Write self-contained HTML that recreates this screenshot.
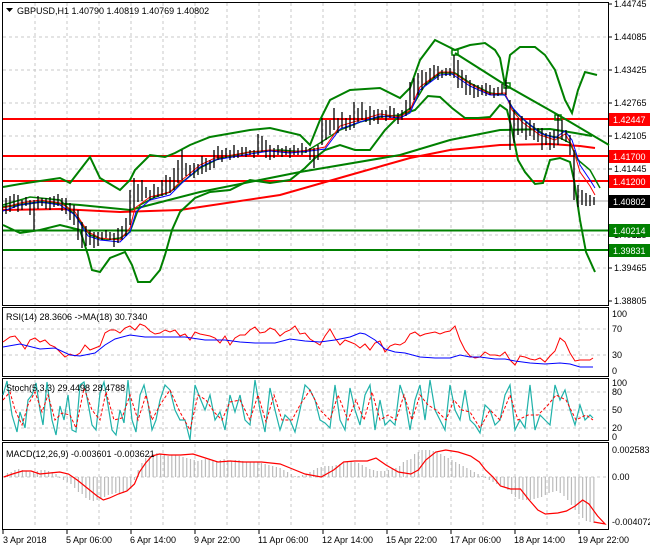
<!DOCTYPE html>
<html><head><meta charset="utf-8"><style>
body{margin:0;background:#fff;width:650px;height:550px;overflow:hidden;font-family:"Liberation Sans",sans-serif}
svg{display:block}
text{font-family:"Liberation Sans",sans-serif;font-size:9px;fill:#000}
</style></head><body>
<svg width="650" height="550" viewBox="0 0 650 550" xmlns="http://www.w3.org/2000/svg">
<rect width="650" height="550" fill="#fff"/>
<g stroke="#c8c8c8" stroke-dasharray="3,3" stroke-width="1">
<path d="M35 3V305M67 3V305M99 3V305M131 3V305M163 3V305M195 3V305M227 3V305M259 3V305M291 3V305M323 3V305M355 3V305M387 3V305M419 3V305M451 3V305M483 3V305M515 3V305M547 3V305M579 3V305"/>
<path d="M35 309V376M67 309V376M99 309V376M131 309V376M163 309V376M195 309V376M227 309V376M259 309V376M291 309V376M323 309V376M355 309V376M387 309V376M419 309V376M451 309V376M483 309V376M515 309V376M547 309V376M579 309V376"/>
<path d="M35 380V440M67 380V440M99 380V440M131 380V440M163 380V440M195 380V440M227 380V440M259 380V440M291 380V440M323 380V440M355 380V440M387 380V440M419 380V440M451 380V440M483 380V440M515 380V440M547 380V440M579 380V440"/>
<path d="M35 444V528M67 444V528M99 444V528M131 444V528M163 444V528M195 444V528M227 444V528M259 444V528M291 444V528M323 444V528M355 444V528M387 444V528M419 444V528M451 444V528M483 444V528M515 444V528M547 444V528M579 444V528"/>
<path d="M3 37H608M3 70H608M3 103H608M3 136H608M3 169H608M3 235H608M3 268H608M3 329H608M3 355H608M3 392H608M3 410H608M3 428H608M3 477H608"/>
</g>
<g fill="none" stroke="#000" stroke-width="1">
<rect x="2.5" y="2.5" width="606" height="303"/>
<rect x="2.5" y="307.5" width="606" height="69"/>
<rect x="2.5" y="378.5" width="606" height="62"/>
<rect x="2.5" y="442.5" width="606" height="87"/>
</g>
<path d="M3 201H608" stroke="#aaa" stroke-width="1"/>
<g stroke="#f00" stroke-width="2"><path d="M3 119H608M3 156H608M3 181H608"/></g>
<g stroke="#008000" stroke-width="2"><path d="M3 230.5H608M3 250H608"/></g>
<polyline fill="none" stroke="#008000" stroke-width="2" points="3,207 40,202 80,205 130,210 200,192 300,172 400,155 450,140 500,130 550,129 575,133 592,136"/>
<polyline fill="none" stroke="#f00" stroke-width="2" points="3,210 60,209 120,212 180,210 280,195 350,175 410,158 450,150 500,145 550,144 580,146 595,148"/>
<polyline fill="none" stroke="#008000" stroke-width="2" points="455,53 507,86 560,116 609,145"/>
<g fill="none" stroke="#008000" stroke-width="1.5"><rect x="452" y="50" width="6" height="5"/><rect x="504" y="83" width="6" height="5"/><rect x="555" y="115" width="6" height="5"/></g>
<g fill="none" stroke="#008000" stroke-width="2">
<polyline points="3,187 20,184 60,178 70,183 80,170 90,157 100,178 120,190 130,180 135,170 150,155 165,157 175,153 190,145 210,137 250,130 270,128 300,135 310,145 320,120 330,100 350,90 380,88 400,98 410,88 420,60 435,40 445,45 455,50 470,45 485,43 495,50 500,58 505,85 510,55 520,47 535,47 545,55 555,70 565,100 572,113 578,90 585,72 597,75"/>
<polyline points="3,225 20,233 40,230 60,225 80,230 88,255 92,270 100,272 110,258 125,252 132,265 138,282 150,282 160,270 165,255 172,230 180,212 195,198 210,192 230,190 250,180 270,183 290,180 305,168 315,158 325,150 340,145 355,150 370,150 385,130 400,115 415,110 428,96 440,97 452,108 465,118 478,118 490,117 500,105 507,110 512,130 518,160 525,172 535,184 543,183 550,160 560,158 570,162 574,180 580,220 586,252 595,272"/>
<polyline stroke-width="1.5" points="3,205 30,197 60,200 75,215 90,235 105,240 120,238 130,232 140,205 155,197 170,192 185,180 200,168 220,158 250,152 280,150 305,152 320,143 340,130 360,122 380,117 400,115 412,107 425,85 440,73 455,73 470,83 490,93 505,95 515,112 530,125 545,135 560,138 570,143 578,160 590,170 600,188"/>
</g>
<polyline fill="none" stroke="#f00" stroke-width="1" points="3,208 20,203 40,200 60,203 75,212 88,232 100,238 120,240 130,228 135,208 150,197 170,192 182,180 200,165 215,158 250,152 270,150 290,152 310,150 325,147 340,126 360,120 380,114 400,117 410,110 420,87 440,72 452,72 470,84 490,94 505,93 512,110 522,122 540,135 555,140 565,134 572,145 580,172 590,186 595,195"/>
<polyline fill="none" stroke="#00f" stroke-width="1" points="3,211 20,205 40,202 60,205 75,215 88,236 100,240 120,242 130,232 136,212 150,200 170,195 182,183 200,167 215,160 250,154 270,151 290,153 310,151 325,149 340,129 360,122 380,116 400,118 410,113 420,90 440,75 452,74 470,86 490,95 505,95 512,107 522,118 540,133 555,138 565,131 572,140 580,165 590,180 595,188"/>
<g stroke="#000" stroke-width="1.3" fill="none">
<path d="M6 198V214M10 196V212M14 194V208M18 195V212M22 200V210M26 197V206M30 200V215M34 200V230M38 196V209M42 198V206M46 198V209M50 197V210M54 196V207M58 194V206M62 198V211M66 198V214M70 203V220M74 205V225M78 210V240M82 222V248M86 226V246M90 230V245M94 232V248M98 232V246M102 232V240M106 230V238M110 232V240M114 233V247M118 228V243M122 226V240M126 218V236M130 190V225M134 178V208M138 184V202M142 180V201M146 187V198M150 190V200M154 184V198M158 187V197M162 180V196M166 175V195M170 177V193M174 168V190M178 160V183M182 150V180M186 163V176M190 165V176M194 163V178M198 164V175M202 156V174M206 158V172M210 160V170M214 150V168M218 146V160M222 150V162M226 148V158M230 150V160M234 145V158M238 150V158M242 147V156M246 147V157M250 150V155M254 150V158M258 134V155M262 136V152M266 140V158M270 145V160M274 148V158M278 145V155M282 148V157M286 146V155M290 148V158M294 145V155M298 148V155M302 143V155M306 147V153M310 148V160M314 148V168M318 145V160M322 118V145M326 120V140M330 120V135M334 108V130M338 118V133M342 112V128M346 118V131M350 115V130M354 102V128M358 108V122M362 102V120M366 110V122M370 106V125M374 110V121M378 109V124M382 110V118M386 110V121M390 106V118M394 108V118M398 113V124M402 110V120M406 100V116M410 82V110M414 78V100M418 73V95M422 70V90M426 72V85M430 68V82M434 65V78M438 66V80M442 70V78M446 68V76M450 68V76M454 55V78M458 60V88M462 70V88M466 75V95M470 80V95M474 84V98M478 85V97M482 85V95M486 83V96M490 85V95M494 88V98M498 87V96M502 84V94M506 80V95M510 100V150M514 110V143M518 118V135M522 116V133M526 122V140M530 120V136M534 123V140M538 128V142M542 128V150M546 133V145M550 132V150M554 130V148M558 115V145M562 120V140M566 130V142M570 135V155M574 150V200M578 185V207M582 190V205M586 193V206M590 195V206M594 197V205"/>
</g>
<path d="M6 8h7l-3.5 4z" fill="#000"/>
<text x="17" y="14" font-size="9.5">GBPUSD,H1  1.40790 1.40819 1.40769 1.40802</text>
<g font-size="9">
<text x="614" y="7">1.44745</text><text x="614" y="40">1.44085</text><text x="614" y="73">1.43425</text><text x="614" y="106">1.42765</text><text x="614" y="139">1.42105</text><text x="614" y="172">1.41445</text><text x="614" y="238">1.40125</text><text x="614" y="271">1.39465</text><text x="614" y="304">1.38805</text>
</g>
<g stroke="#000"><path d="M608 4h4M608 37h4M608 70h4M608 103h4M608 136h4M608 169h4M608 235h4M608 268h4M608 301h4"/></g>
<rect x="609" y="113" width="41" height="13" fill="#f00"/><text x="613" y="123" style="fill:#fff">1.42447</text>
<rect x="609" y="150" width="41" height="13" fill="#f00"/><text x="613" y="160" style="fill:#fff">1.41700</text>
<rect x="609" y="175" width="41" height="13" fill="#f00"/><text x="613" y="185" style="fill:#fff">1.41200</text>
<rect x="609" y="195" width="41" height="13" fill="#000"/><text x="613" y="205" style="fill:#fff">1.40802</text>
<rect x="609" y="224" width="41" height="13" fill="#008000"/><text x="613" y="234" style="fill:#fff">1.40214</text>
<rect x="609" y="244" width="41" height="13" fill="#008000"/><text x="613" y="254" style="fill:#fff">1.39831</text>
<text x="6" y="320" font-size="9">RSI(14) 28.3606  -&gt;MA(18) 30.7340</text>
<polyline fill="none" stroke="#f00" stroke-width="1" points="3,342 10,337 15,336 20,342 25,349 30,340 35,338 40,342 45,340 50,345 55,347 60,352 65,357 70,354 75,356 80,353 85,345 90,350 95,348 100,346 105,333 110,330 115,330 120,333 125,328 130,326 135,330 140,324 145,326 150,331 155,334 160,333 165,330 170,332 175,330 180,336 185,334 190,340 195,332 200,334 205,335 210,336 215,338 220,343 225,336 230,345 235,338 240,335 245,335 250,330 255,327 260,333 265,332 270,328 275,330 280,336 285,332 290,330 295,326 300,334 305,333 310,339 315,342 320,345 325,336 330,329 335,338 340,345 345,340 350,342 355,344 360,348 365,344 370,350 375,343 380,341 385,352 390,346 395,344 400,345 405,342 410,334 415,332 420,336 425,334 430,333 435,332 440,334 445,332 450,331 455,326 460,340 465,350 470,356 475,358 480,357 485,352 490,355 495,355 500,356 505,352 510,360 515,365 520,356 525,357 530,359 535,360 540,358 545,362 550,356 555,351 560,338 565,342 570,353 575,361 580,360 585,360 590,360 593,358"/>
<polyline fill="none" stroke="#00f" stroke-width="1" points="3,347 20,344 40,349 55,348 70,355 80,356 95,353 105,345 115,339 130,335 145,337 165,337 185,337 205,340 225,340 240,342 255,343 275,343 290,339 305,341 320,342 335,340 350,337 360,333 365,334 375,340 385,349 395,352 405,353 420,357 435,358 450,358 460,355 470,357 480,357 495,359 505,359 515,361 530,363 545,364 560,363 570,364 580,367 593,367"/>
<g font-size="9"><text x="612" y="317">100</text><text x="612" y="332">70</text><text x="612" y="358">30</text><text x="612" y="374">0</text></g>
<polyline fill="none" stroke="#20b2aa" stroke-width="1.2" points="3,395 7,381 12,415 17,432 20,412 25,428 28,400 32,395 36,383 40,410 43,425 47,382 52,420 56,435 60,406 64,420 68,395 72,430 76,432 80,385 84,382 88,403 92,425 96,430 100,393 104,382 108,405 112,430 116,435 120,410 124,423 128,380 132,420 136,432 140,395 144,385 148,403 152,430 156,420 160,400 165,385 170,390 175,410 180,420 185,420 190,440 195,385 200,398 205,410 210,395 215,420 220,412 225,430 230,395 235,412 240,395 245,420 250,425 255,380 260,410 265,432 270,388 275,410 280,430 285,415 290,420 295,432 300,410 305,385 310,390 315,400 320,420 325,423 330,428 335,385 340,420 345,430 350,388 355,410 360,425 365,395 370,385 375,430 380,400 385,425 390,420 395,425 400,385 405,400 410,430 415,400 420,385 425,420 430,380 435,410 440,420 445,430 450,385 455,410 460,420 465,390 470,420 475,425 480,433 485,405 490,410 495,425 500,420 505,395 510,385 515,430 520,420 525,428 530,385 535,430 540,415 545,420 550,425 555,385 560,400 565,390 570,410 575,425 580,405 585,420 590,415 593,418"/>
<polyline fill="none" stroke="#f00" stroke-width="1" stroke-dasharray="3,2" points="3,400 10,392 15,410 22,425 28,405 35,392 42,412 48,395 55,420 62,413 70,415 76,428 84,388 92,410 100,420 106,392 114,420 122,418 130,395 138,420 146,395 152,420 160,405 170,390 180,412 190,430 198,395 206,400 214,412 222,420 230,402 240,400 250,420 258,395 266,422 274,395 282,420 292,420 300,405 310,390 320,410 330,420 338,395 348,420 356,400 364,420 372,392 380,420 388,415 396,420 404,395 412,420 420,395 428,405 436,410 446,420 454,400 462,410 470,412 480,428 490,410 500,420 510,395 518,420 528,415 538,415 548,405 556,395 566,400 576,420 586,415 593,420"/>
<g font-size="9"><text x="612" y="386">100</text><text x="612" y="395">80</text><text x="612" y="413">50</text><text x="612" y="431">20</text><text x="612" y="440">0</text></g>
<text x="6" y="391" font-size="9">Stoch(5,3,3) 29.4498 28.4788</text>
<g transform="scale(1.245,1)">
<g stroke="#bbb" stroke-width="1.2" vector-effect="non-scaling-stroke">
<path vector-effect="non-scaling-stroke" d="M6 477V473M9 477V472M12 477V470M15 477V469M18 477V470M21 477V471M24 477V472M27 477V472M30 477V471M33 477V470M36 477V470M39 477V471M42 477V472M45 477V474M48 477V478M51 477V480M54 477V482M57 477V484M60 477V488M63 477V492M66 477V494M69 477V498M72 477V500M75 477V501M78 477V500M81 477V499M84 477V497M87 477V495M90 477V494M93 477V493M96 477V493M99 477V493M102 477V491M105 477V488M108 477V480M111 477V470M114 477V463M117 477V458M120 477V455M123 477V454M126 477V453M129 477V454M132 477V455M135 477V456M138 477V455M141 477V455M144 477V456M147 477V457M150 477V458M153 477V459M156 477V460M159 477V461M162 477V460M165 477V459M168 477V460M171 477V461M174 477V461M177 477V460M180 477V459M183 477V460M186 477V461M189 477V460M192 477V460M195 477V461M198 477V462M201 477V462M204 477V462M207 477V462M210 477V463M213 477V464M216 477V465M219 477V466M222 477V467M225 477V468M228 477V470M231 477V472M234 477V474M237 477V476M240 477V476M243 477V475M246 477V474M249 477V472M252 477V470M255 477V468M258 477V467M261 477V466M264 477V466M267 477V466M270 477V465M273 477V464M276 477V463M279 477V462M282 477V461M285 477V462M288 477V463M291 477V465M294 477V467M297 477V469M300 477V470M303 477V471M306 477V471M309 477V471M312 477V470M315 477V469M318 477V468M321 477V466M324 477V462M327 477V460M330 477V459M333 477V454M336 477V452M339 477V450M342 477V450M345 477V450M348 477V451M351 477V452M354 477V454M357 477V456M360 477V458M363 477V460M366 477V462M369 477V464M372 477V466M375 477V468M378 477V470M381 477V472M384 477V474M387 477V476M390 477V478M393 477V480M396 477V482M399 477V484M402 477V485M405 477V487M408 477V490M411 477V494M414 477V497M417 477V499M420 477V500M423 477V500M426 477V500M429 477V499M432 477V498M435 477V497M438 477V495M441 477V493M444 477V492M447 477V491M450 477V493M453 477V496M456 477V500M459 477V505M462 477V510M465 477V514M468 477V518M471 477V521M474 477V522M477 477V523"/>
</g>
<polyline vector-effect="non-scaling-stroke" fill="none" stroke="#f00" stroke-width="1.2" points="3,477 10,474 18,471 25,471 32,474 40,473 48,472 55,474 62,480 70,488 78,496 83,500 88,498 95,494 102,491 108,484 112,472 117,463 122,456 128,454 136,455 145,455 155,454 165,458 175,462 185,461 195,462 210,462 225,464 235,469 245,474 258,477 268,470 276,462 285,461 295,461 302,458 310,465 320,472 330,474 336,470 342,460 350,452 358,450 368,452 378,456 385,462 390,470 396,477 402,486 410,489 418,489 425,500 432,510 438,514 448,513 455,511 462,506 468,500 473,504 480,516 486,524 477,522"/>
</g>
<text x="6" y="457" font-size="9">MACD(12,26,9) -0.003601 -0.003621</text>
<g font-size="9"><text x="612" y="453">0.002583</text><text x="612" y="480">0.00</text><text x="612" y="525">-0.004072</text></g>
<g stroke="#000"><path d="M3 530v4M67 530v4M131 530v4M195 530v4M259 530v4M323 530v4M387 530v4M451 530v4M515 530v4M579 530v4"/></g>
<g font-size="8.5"><text x="3" y="543">3 Apr 2018</text><text x="66" y="543">5 Apr 06:00</text><text x="130" y="543">6 Apr 14:00</text><text x="194" y="543">9 Apr 22:00</text><text x="258" y="543">11 Apr 06:00</text><text x="322" y="543">12 Apr 14:00</text><text x="386" y="543">15 Apr 22:00</text><text x="450" y="543">17 Apr 06:00</text><text x="514" y="543">18 Apr 14:00</text><text x="578" y="543">19 Apr 22:00</text></g>
</svg>
</body></html>
